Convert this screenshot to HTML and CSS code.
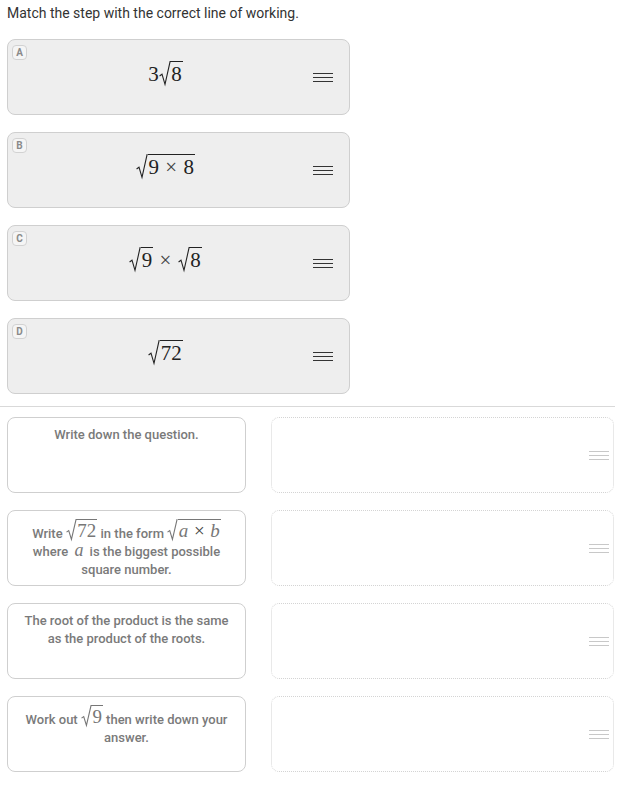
FILE: index.html
```html
<!DOCTYPE html>
<html lang="en">
<head>
    <meta charset="UTF-8">
    <meta name="viewport" content="width=device-width, initial-scale=1.0">
    <title>Match the step</title>
    <link rel="stylesheet" href="styles.css">
</head>
<body>

    <p class="prompt">Match the step with the correct line of working.</p>

    <!-- Lines of working (draggable) -->
    <div class="options">
        <div class="option">
            <span class="badge">A</span>
            <div class="math">3<span class="sqrt"><svg class="rad" viewBox="0 0 10 20" preserveAspectRatio="none"><path d="M0.5 12.5 L2.6 11 L5.2 19.5 L9.6 0.5 L10 0.5" /></svg><span class="radicand">8</span></span></div>
            <span class="handle"><i></i><i></i><i></i></span>
        </div>
        <div class="option">
            <span class="badge">B</span>
            <div class="math"><span class="sqrt"><svg class="rad" viewBox="0 0 10 20" preserveAspectRatio="none"><path d="M0.5 12.5 L2.6 11 L5.2 19.5 L9.6 0.5 L10 0.5" /></svg><span class="radicand">9 <span class="op">×</span> 8</span></span></div>
            <span class="handle"><i></i><i></i><i></i></span>
        </div>
        <div class="option">
            <span class="badge">C</span>
            <div class="math"><span class="sqrt"><svg class="rad" viewBox="0 0 10 20" preserveAspectRatio="none"><path d="M0.5 12.5 L2.6 11 L5.2 19.5 L9.6 0.5 L10 0.5" /></svg><span class="radicand">9</span></span> <span class="op">×</span> <span class="sqrt"><svg class="rad" viewBox="0 0 10 20" preserveAspectRatio="none"><path d="M0.5 12.5 L2.6 11 L5.2 19.5 L9.6 0.5 L10 0.5" /></svg><span class="radicand">8</span></span></div>
            <span class="handle"><i></i><i></i><i></i></span>
        </div>
        <div class="option">
            <span class="badge">D</span>
            <div class="math"><span class="sqrt"><svg class="rad" viewBox="0 0 10 20" preserveAspectRatio="none"><path d="M0.5 12.5 L2.6 11 L5.2 19.5 L9.6 0.5 L10 0.5" /></svg><span class="radicand">72</span></span></div>
            <span class="handle"><i></i><i></i><i></i></span>
        </div>
    </div>

    <hr class="divider">

    <!-- Steps and drop slots -->
    <div class="matches">
        <div class="step">Write down the question.</div>
        <div class="slot"><span class="handle light"><i></i><i></i><i></i></span></div>

        <div class="step">Write <span class="imath"><span class="sqrt"><svg class="rad" viewBox="0 0 10 20" preserveAspectRatio="none"><path d="M0.5 12.5 L2.6 11 L5.2 19.5 L9.6 0.5 L10 0.5" /></svg><span class="radicand">72</span></span></span> in the form <span class="imath"><span class="sqrt"><svg class="rad" viewBox="0 0 10 20" preserveAspectRatio="none"><path d="M0.5 12.5 L2.6 11 L5.2 19.5 L9.6 0.5 L10 0.5" /></svg><span class="radicand"><i>a</i> <span class="op">×</span> <i>b</i></span></span></span> where <i class="var">a</i> is the biggest possible square number.</div>
        <div class="slot"><span class="handle light"><i></i><i></i><i></i></span></div>

        <div class="step">The root of the product is the same as the product of the roots.</div>
        <div class="slot"><span class="handle light"><i></i><i></i><i></i></span></div>

        <div class="step">Work out <span class="imath"><span class="sqrt"><svg class="rad" viewBox="0 0 10 20" preserveAspectRatio="none"><path d="M0.5 12.5 L2.6 11 L5.2 19.5 L9.6 0.5 L10 0.5" /></svg><span class="radicand">9</span></span></span> then write down your answer.</div>
        <div class="slot"><span class="handle light"><i></i><i></i><i></i></span></div>
    </div>

</body>
</html>
```

FILE: styles.css
```css
body {
    margin: 0;
    padding: 0 14px 0 7px;
    background-color: #ffffff;
    color: #333333;
    font-family: Roboto, "Liberation Sans", Arial, sans-serif;
}

.prompt {
    margin: 0;
    padding-top: 4px;
    height: 36px;
    box-sizing: border-box;
    font-size: 14px;
    line-height: 18px;
    color: #333;
}

/* Obere Karten */
.options {
    display: flex;
    flex-direction: column;
    gap: 17px;
    width: 343px;
    margin-top: 3px;
}

.option {
    position: relative;
    display: flex;
    align-items: center;
    height: 76px;
    box-sizing: border-box;
    background-color: #eeeeee;
    border: 1px solid #cfcfcf;
    border-radius: 8px;
    padding-right: 16px;
}

.badge {
    position: absolute;
    top: 5px;
    left: 4px;
    width: 15px;
    height: 15px;
    box-sizing: border-box;
    border: 1px solid #d2d2d2;
    border-radius: 4px;
    background-color: #f5f5f5;
    color: #8a8a8a;
    font-size: 10px;
    font-weight: 700;
    line-height: 13px;
    text-align: center;
}

.math {
    flex: 1;
    padding-left: 18px;
    padding-right: 8px;
    margin-top: -6px;
    text-align: center;
    font-family: "Liberation Serif", "DejaVu Serif", serif;
    font-size: 21px;
    color: #222;
}

.op {
    font-size: 1em;
    color: #444;
    padding: 0 1px;
}

.sqrt {
    display: inline-flex;
    align-items: stretch;
    vertical-align: -4px;
}

.rad {
    width: 0.55em;
    height: auto;
    overflow: visible;
}

.rad path {
    fill: none;
    stroke: #222;
    stroke-width: 1.1;
    vector-effect: non-scaling-stroke;
}

.radicand {
    border-top: 1px solid #222;
    padding: 2px 1px 0 1px;
    line-height: 1;
}

.handle {
    display: flex;
    flex-direction: column;
    gap: 3px;
    width: 20px;
}

.handle i {
    display: block;
    height: 1px;
    background-color: #333;
}

.handle.light i {
    background-color: #c8c8c8;
}

.divider {
    margin: 12px 0 10px -7px;
    width: 615px;
    border: none;
    border-top: 1px solid #d9d9d9;
}

/* Untere Zeilen */
.matches {
    display: grid;
    grid-template-columns: 239px 343px;
    column-gap: 25px;
    row-gap: 17px;
}

.step {
    height: 76px;
    box-sizing: border-box;
    border: 1px solid #cfcfcf;
    border-radius: 8px;
    padding: 8px 10px 0 10px;
    text-align: center;
    font-size: 13px;
    font-weight: 500;
    line-height: 18px;
    color: #7a7a7a;
}

.imath {
    font-family: "Liberation Serif", "DejaVu Serif", serif;
    font-size: 19px;
    font-weight: 400;
    color: #777;
}

.imath .sqrt {
    vertical-align: -2px;
}

.imath .radicand {
    padding-top: 1px;
    border-top-color: #777;
}

.imath .rad path {
    stroke: #777;
}

.var {
    font-family: "Liberation Serif", "DejaVu Serif", serif;
    font-size: 18px;
    font-weight: 400;
    line-height: 14px;
    margin: 0 3px;
    color: #777;
}

.slot {
    display: flex;
    align-items: center;
    justify-content: flex-end;
    height: 76px;
    box-sizing: border-box;
    border: 1px dotted #d4d4d4;
    border-radius: 8px;
    padding-right: 4px;
}
```
